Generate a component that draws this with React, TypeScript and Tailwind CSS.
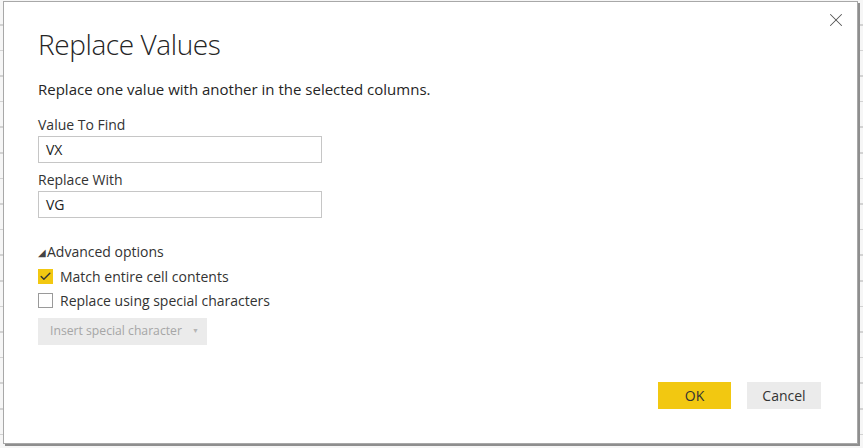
import { Check, X } from 'lucide-react';

const font = { fontFamily: '"Open Sans", "Noto Sans", sans-serif' };

function TextField({ label, value }: { label: string; value: string }) {
  return (
    <div className="flex flex-col">
      <label className="text-[14px] leading-[18px] text-[#333]">{label}</label>
      <div className="mt-[2px] flex h-[27px] w-[284px] items-center border border-[#c6c6c6] bg-white px-[7px] text-[14px] text-[#222]">
        {value}
      </div>
    </div>
  );
}

function CheckRow({ checked, label }: { checked?: boolean; label: string }) {
  return (
    <div className="flex h-[24px] items-center gap-[7px]">
      {checked ? (
        <span className="flex h-[15px] w-[15px] items-center justify-center bg-[#f2c811]">
          <Check size={13} strokeWidth={2.6} className="text-[#333]" />
        </span>
      ) : (
        <span className="h-[15px] w-[15px] border border-[#9a9a9a] bg-white" />
      )}
      <span className="text-[14px] text-[#333]">{label}</span>
    </div>
  );
}

export default function App() {
  return (
    <div
      className="h-[448px] w-[863px] overflow-hidden bg-[#f6f6f6] bg-[repeating-linear-gradient(to_bottom,transparent_0,transparent_24px,#d2d2d2_24px,#d2d2d2_25.6px)] pl-[3px] pt-[1px]"
      style={font}
    >
      <div className="flex h-[443px] w-[855px] flex-col border border-[#a8a8a8] bg-white shadow-[2px_2px_0_#8e8e8e]">
        {/* header */}
        <div className="relative pl-[34px] pt-[24px]">
          <h1 className="text-[28px] font-light leading-[36px] tracking-[-0.4px] text-[#252525]">Replace Values</h1>
          <button className="absolute right-[10px] top-[7px] text-[#555]">
            <X size={22} strokeWidth={1.1} />
          </button>
        </div>

        <div className="flex flex-col pl-[34px]">
          <p className="mt-[17px] text-[15px] leading-[20px] text-[#252525]">
            Replace one value with another in the selected columns.
          </p>

          <div className="mt-[17px] flex flex-col gap-[8px]">
            <TextField label="Value To Find" value="VX" />
            <TextField label="Replace With" value="VG" />
          </div>

          <div className="mt-[25px] flex items-center text-[14px] leading-[18px] text-[#333]">
            <span className="mr-[1px] text-[10px] text-[#444]">◢</span>
            Advanced options
          </div>

          <div className="mt-[3px] flex flex-col">
            <CheckRow checked label="Match entire cell contents" />
            <CheckRow label="Replace using special characters" />
          </div>

          <button className="mt-[6px] flex h-[27px] w-[169px] items-center gap-[10px] whitespace-nowrap bg-[#ebebeb] pl-[12px] text-[12.2px] text-[#a6a6a6]">
            Insert special character
            <span className="text-[7px] text-[#b5b5b5]">▼</span>
          </button>
        </div>

        <div className="mt-auto flex justify-end gap-[16px] pb-[34px] pr-[36px]">
          <button className="h-[27px] w-[73px] bg-[#f2c811] text-[14px] text-[#333]">OK</button>
          <button className="h-[27px] w-[74px] bg-[#ebebeb] text-[14px] text-[#333]">Cancel</button>
        </div>
      </div>
    </div>
  );
}
